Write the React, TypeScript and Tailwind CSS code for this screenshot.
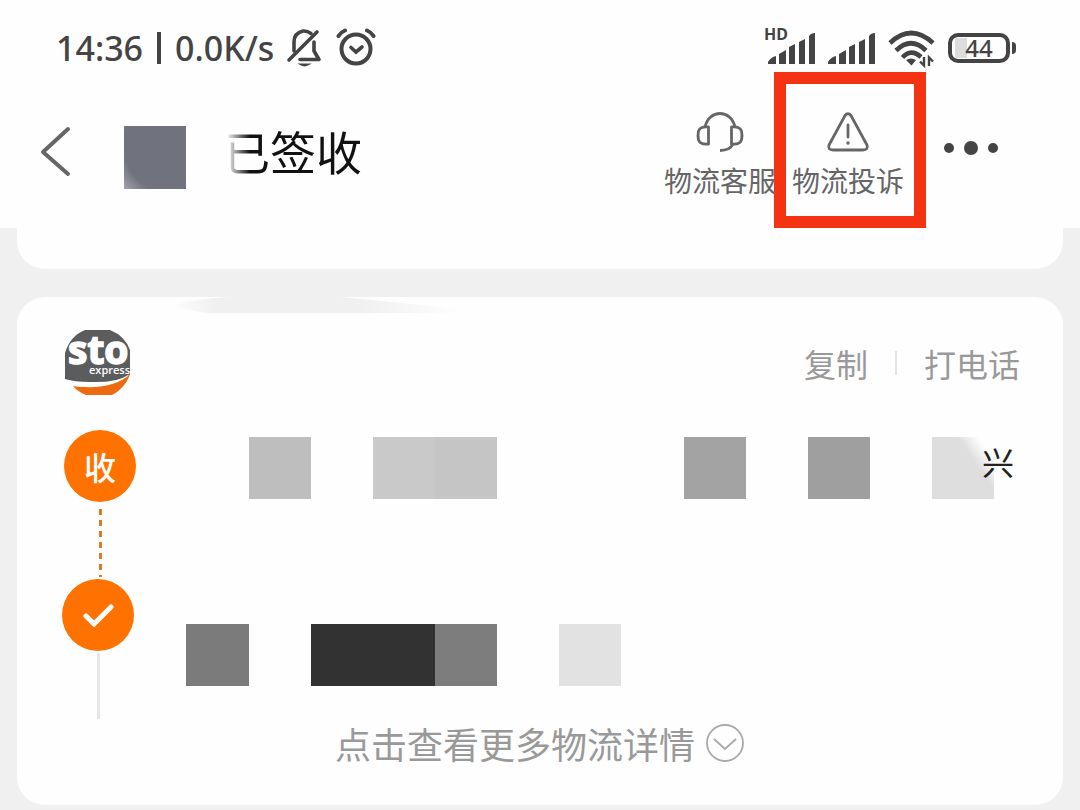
import type { ReactNode } from 'react';

type Block = { left: number; width: number; color: string };

function MutedBell() {
  return (
    <svg className="h-10 w-9 shrink-0" viewBox="0 0 36 40" fill="none" stroke="#444" strokeWidth="3.6" strokeLinecap="round" aria-hidden="true">
      <path d="M25 5.500Q21 2.500 17 3 8 5 8 14v9" />
      <path d="M31 4 3 32" />
      <path d="M28 14v9l5 8.500H14" strokeLinejoin="round" />
      <path d="M15 36.500h7q-3.500 2-7 0z" strokeWidth="2" fill="#444" />
    </svg>
  );
}

function AlarmClock() {
  return (
    <svg className="h-10 w-10 shrink-0" viewBox="0 0 40 40" fill="none" stroke="#444" strokeWidth="4" strokeLinecap="round" aria-hidden="true">
      <circle cx="20" cy="21" r="14.500" />
      <path d="M2.500 8Q5 4 9 2.500M31 2.500Q35 4 37.500 8" />
      <path d="m15 19.500 5 4.500 6-5" strokeWidth="3.600" />
    </svg>
  );
}

function Signal() {
  return (
    <svg className="h-10 w-12 shrink-0" viewBox="0 0 48 40" fill="#444" aria-hidden="true">
      <path d="M0 36v-2q3-5 8-6v8zM11 26l7-4v14h-7zM21 19l6-3v20h-6zM31 14l6-3v25h-6zM41 8q2-3 6-3v31h-6z" />
    </svg>
  );
}

function Wifi() {
  return (
    <svg className="h-10 w-12 shrink-0" viewBox="0 0 48 40" fill="none" stroke="#444" strokeWidth="4.600" aria-hidden="true">
      <path d="M2 15Q23-5 45 15M8 22.500Q23 8 38 22.500M14.500 29.500Q23 20 33 29" />
      <path d="m18 32q5-3 10 0l-4.500 5.500z" fill="#444" stroke="none" />
      <path d="M36 29v8.500l-4-4M41 38v-8.500l4 4" strokeWidth="2.400" />
    </svg>
  );
}

function HeadsetIcon() {
  return (
    <svg className="h-10 w-12" viewBox="0 0 48 40" fill="none" stroke="#666" strokeWidth="2.800" strokeLinejoin="round" aria-hidden="true">
      <path d="M12.500 15v17q-8 1-10-4-1-4.500 0-9 2-5 10-4zM35.500 15v17q8 1 10-4 1-4.500 0-9-2-5-10-4z" />
      <path d="M9 15C13-3 35-3 39 15M37 32q-3 6.500-13 6.500" />
    </svg>
  );
}

function WarningIcon() {
  return (
    <svg className="h-10 w-11" viewBox="0 0 44 40" fill="none" stroke="#666" strokeWidth="2.800" strokeLinecap="round" aria-hidden="true">
      <path d="M19 3.500q3-3.500 6 0L41 33q1.500 5-4 5H7q-5.500 0-4-5z" />
      <path d="M22 13v12" />
      <circle cx="22" cy="31" r="1.700" fill="#666" stroke="none" />
    </svg>
  );
}

function StoLogo() {
  return (
    <svg className="h-17 w-17 overflow-visible" viewBox="0 0 68 68" role="img" aria-label="sto express">
      <path d="M1 50V24Q6 7 21 1h25q15 6 20 20v25Q52 54 26 53 10 53 1 50z" fill="#5b5c5e" />
      <path d="M66 46Q60 60 48 66H22Q14 63 9 57q34 4 57-11z" fill="#ee6a10" />
      <path d="M3 51q38 10 63-6-18 17-57 12z" fill="#fff" />
      <text x="4" y="35" fill="#fff" stroke="#fff" strokeWidth="1.600" className="font-['Open_Sans',sans-serif] text-[39px] font-bold">sto</text>
      <text x="25" y="45" fill="#fff" className="font-['Open_Sans',sans-serif] text-[11px] font-semibold">express</text>
    </svg>
  );
}

function HeaderAction({ icon, label }: { icon: ReactNode; label: string }) {
  return (
    <button type="button" className="flex flex-col items-center gap-2 whitespace-nowrap text-[28px] leading-10 text-[#666]">
      {icon}
      <span>{label}</span>
    </button>
  );
}

// Masked address and tracking text, each offset counted from the previous block
function MaskedText({ blocks }: { blocks: Block[] }) {
  return (
    <div className="flex h-[62px]">
      {blocks.map((block) => (
        <span
          key={block.left + block.color}
          className="shrink-0"
          style={{ marginLeft: block.left, width: block.width, background: block.color }}
        />
      ))}
    </div>
  );
}

const addressStart: Block[] = [
  { left: 0, width: 62, color: '#bebebe' },
  { left: 62, width: 62, color: '#c9c9c9' },
  { left: 0, width: 62, color: '#c5c5c5' },
];

const addressEnd: Block[] = [
  { left: 0, width: 62, color: '#a3a3a3' },
  { left: 62, width: 62, color: '#9f9f9f' },
  { left: 62, width: 62, color: 'linear-gradient(55deg, #dedede 65%, #fefefe 85%)' },
];

const statusBlocks: Block[] = [
  { left: 0, width: 63, color: '#7b7b7b' },
  { left: 62, width: 124, color: '#323232' },
  { left: 0, width: 62, color: '#7d7d7d' },
  { left: 62, width: 62, color: '#e2e2e2' },
];

export default function App() {
  return (
    <div className="min-h-screen bg-[#f0f0f0] pb-1 font-['Noto_Sans_CJK_SC',sans-serif]">
      <header className="bg-[#fefefe]">
        <div className="flex h-24 items-center justify-between pr-16 pl-14 font-['Noto_Sans',sans-serif] text-[#444]">
          <div className="flex items-center text-[34px] font-medium whitespace-nowrap">
            <span>14:36</span>
            <span className="mx-3.5 h-8 w-1 bg-[#444]" />
            <span className="mr-3">0.0K/s</span>
            <MutedBell />
            <span className="ml-3.5"><AlarmClock /></span>
          </div>
          <div className="flex items-center gap-3">
            <div className="relative">
              <span className="absolute -top-1 -left-1 text-base leading-5 font-bold">HD</span>
              <Signal />
            </div>
            <Signal />
            <Wifi />
            <div className="flex items-center gap-0.5">
              <div className="flex h-[30px] w-[62px] items-center justify-center rounded-[10px] border-4 border-[#444] text-2xl leading-none font-medium">
                <span className="bg-[linear-gradient(90deg,#ddd_25%,transparent_25%)] px-2.5 leading-5">44</span>
              </div>
              <span className="h-3 w-1 rounded-r bg-[#444]" />
            </div>
          </div>
        </div>

        <div className="flex h-33 items-start justify-between pr-[82px] pl-10">
          <div className="flex items-center pt-[30px]">
            <button type="button" aria-label="返回" className="-mt-3">
              <svg className="h-14 w-8" viewBox="0 0 32 56" fill="none" stroke="#666" strokeWidth="4" aria-hidden="true">
                <path d="M28 5 3 28l25 22" strokeLinecap="round" strokeLinejoin="round" />
              </svg>
            </button>
            <span className="ml-13 h-[63px] w-[62px] bg-[radial-gradient(circle_at_80%_30%,#70727e_75%,#d8d8d8_125%)]" />
            <h1 className="ml-9 -mt-4 bg-[linear-gradient(90deg,#fefefe_3%,#111_20%)] bg-clip-text pl-0.5 text-[46px] leading-[62px] whitespace-nowrap text-transparent">已签收</h1>
          </div>
          <div className="flex pt-4">
            <HeaderAction icon={<HeadsetIcon />} label="物流客服" />
            <div className="relative ml-4">
              <HeaderAction icon={<WarningIcon />} label="物流投诉" />
              <span className="pointer-events-none absolute -top-10 -right-[22px] -bottom-7 -left-[18px] border-12 border-[#f43312]" />
            </div>
            <button type="button" aria-label="更多" className="ml-10 flex h-18 items-center gap-2.5">
              <span className="size-2.5 rounded-full bg-[#444]" />
              <span className="size-3.5 rounded-full bg-[#444]" />
              <span className="size-2.5 rounded-full bg-[#444]" />
            </button>
          </div>
        </div>
      </header>

      <div className="mx-[17px] h-[41px] rounded-b-[28px] bg-[#fefefe]" />

      <main className="relative mx-[17px] mt-7 rounded-[28px] bg-[#fefefe] px-[47px] pt-8 pb-[38px]">
        <svg className="absolute top-0 left-36 h-4 w-80" viewBox="0 0 320 16" aria-hidden="true">
          <defs>
            <linearGradient id="card-edge">
              <stop offset="0" stopColor="#fefefe" />
              <stop offset="0.15" stopColor="#f0f0f0" />
              <stop offset="0.65" stopColor="#f0f0f0" />
              <stop offset="1" stopColor="#fefefe" />
            </linearGradient>
          </defs>
          <path d="M10 8Q30 2 70 0h110l120 12v4H50Q30 15 10 8z" fill="url(#card-edge)" />
        </svg>

        <div className="flex h-17 items-center justify-between">
          <StoLogo />
          <div className="flex items-center text-[32px] leading-12 text-[#999]">
            <button type="button">复制</button>
            <span className="mx-[27px] h-6 w-0.5 bg-[#e4e4e4]" />
            <button type="button" className="-mr-1">打电话</button>
          </div>
        </div>

        <div className="mt-[33px] flex">
          <div className="flex w-18 flex-col items-center">
            <span className="flex size-18 items-center justify-center rounded-full bg-[#ff7200] text-[32px] font-medium text-white">收</span>
            <span className="mt-[7px] mb-0.5 h-[68px] w-[3px] bg-[repeating-linear-gradient(#e07c20_0_6px,transparent_6px_11px)]" />
            <span className="-ml-1 flex size-18 items-center justify-center rounded-full bg-[#ff7200]">
              <svg className="h-6 w-8" viewBox="0 0 32 24" fill="none" stroke="#fff" strokeWidth="5" strokeLinecap="round" aria-hidden="true">
                <path d="m4 13 8 8L29 4" />
              </svg>
            </span>
            <span className="mt-0.5 -ml-1 h-[66px] w-[3px] bg-[#e6e6e6]" />
          </div>

          <div className="flex-1 pt-[7px]">
            <div className="flex items-center justify-between pr-0.5 pl-[113px]">
              <MaskedText blocks={addressStart} />
              <div className="flex items-start">
                <MaskedText blocks={addressEnd} />
                <span className="-ml-3 text-[32px] leading-12 text-[#222]">兴</span>
              </div>
            </div>
            <div className="mt-[125px] pl-[50px]">
              <MaskedText blocks={statusBlocks} />
            </div>
          </div>
        </div>

        <button type="button" className="mx-auto flex items-center gap-2.5 text-[36px] leading-12 text-[#999]">
          点击查看更多物流详情
          <svg className="size-10" viewBox="0 0 40 40" fill="none" stroke="#aaa" strokeWidth="1.800" aria-hidden="true">
            <circle cx="20" cy="20" r="18" />
            <path d="m9 16 11 10 11-10" />
          </svg>
        </button>
      </main>
    </div>
  );
}
